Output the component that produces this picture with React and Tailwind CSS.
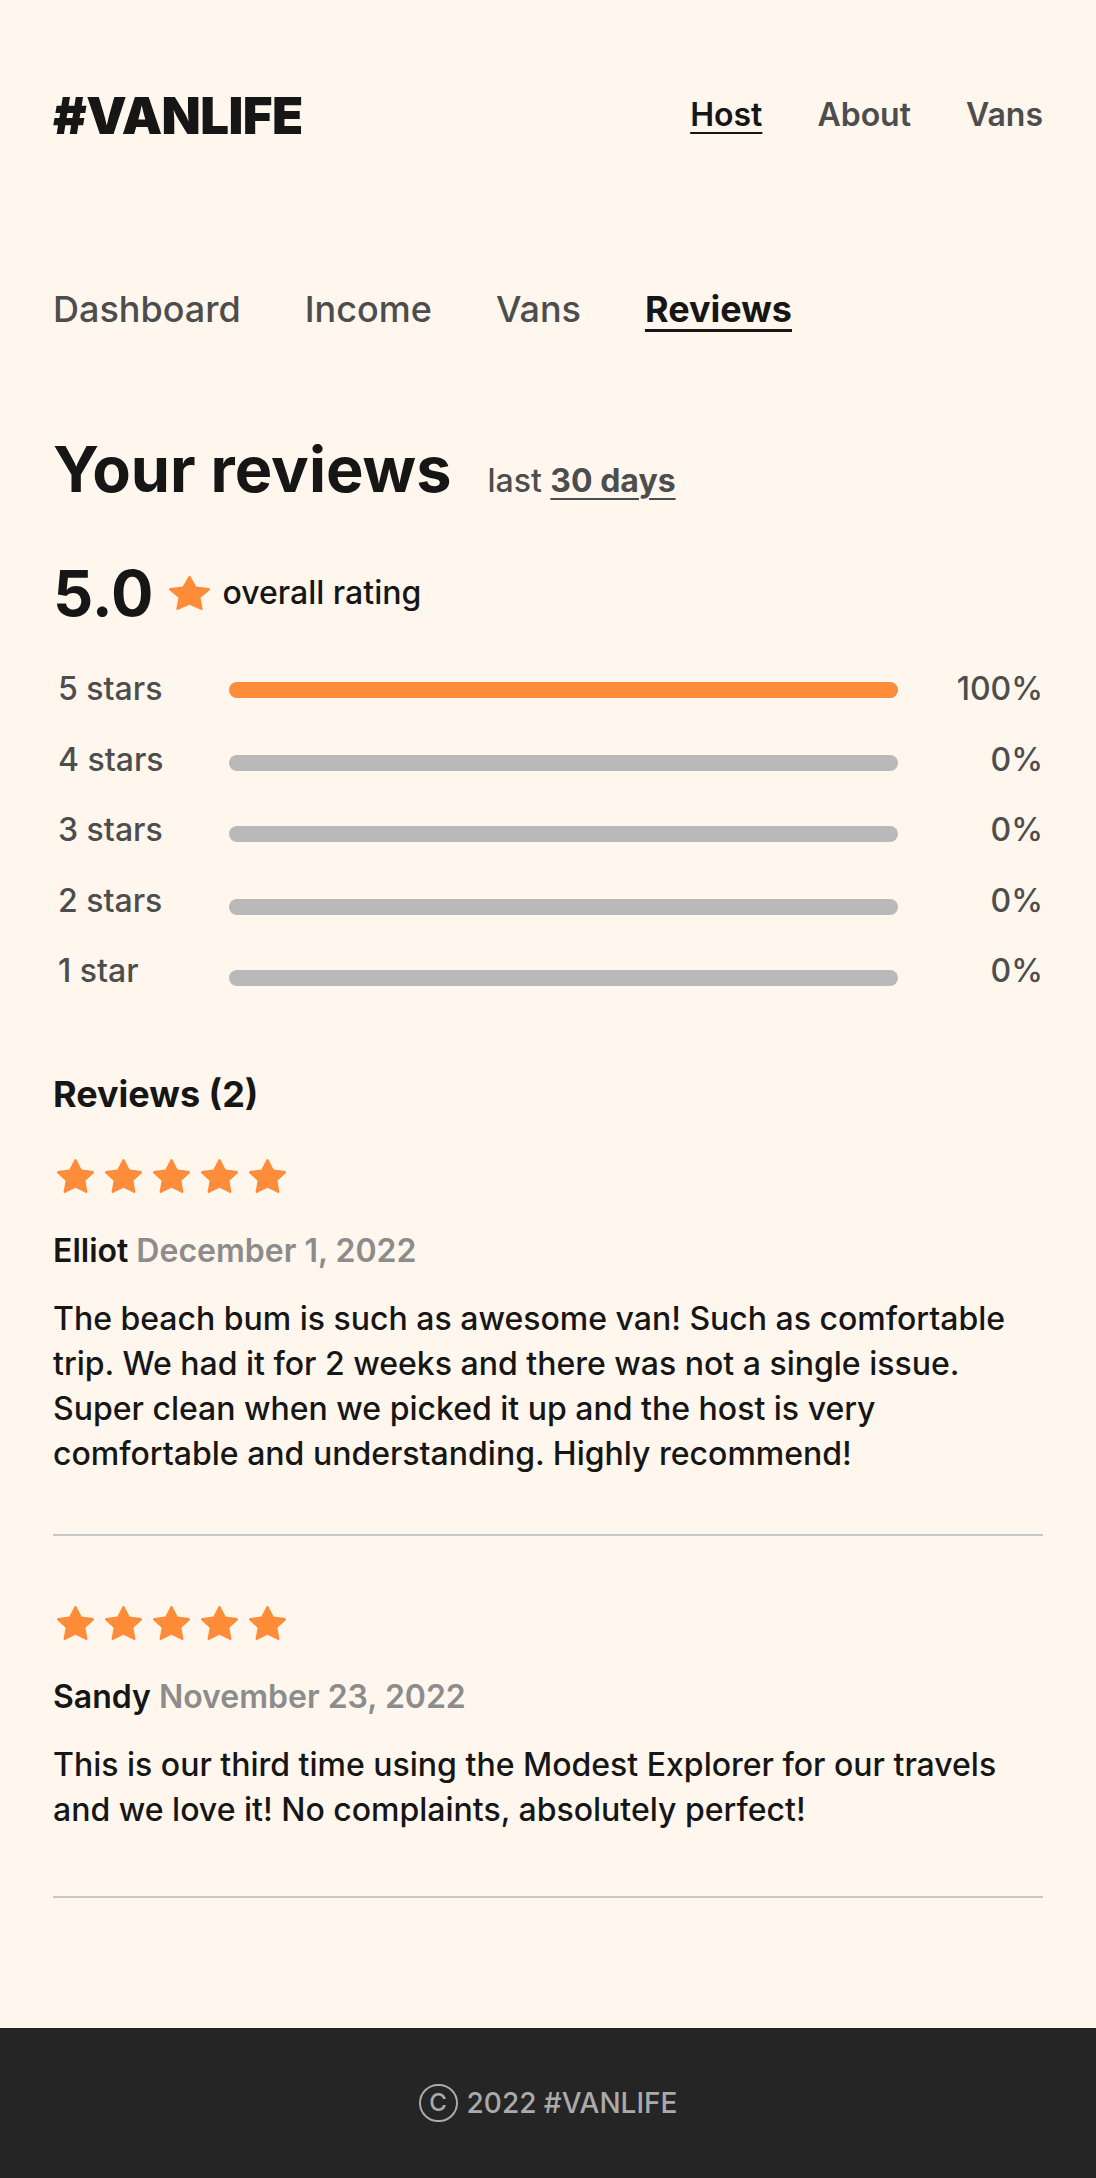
import React from "react";

const starPath =
  "M3.612 15.443c-.386.198-.824-.149-.746-.592l.83-4.73L.173 6.765c-.329-.314-.158-.888.283-.95l4.898-.696L7.538.792c.197-.39.73-.39.927 0l2.184 4.327 4.898.696c.441.062.612.636.282.95l-3.522 3.356.83 4.73c.078.443-.36.79-.746.592L8 13.187l-4.389 2.256z";

const Star = ({ className = "" }) => (
  <svg viewBox="0 0.5 16 15" preserveAspectRatio="none" className={className} fill="#FF8C38">
    <path d={starPath} />
  </svg>
);

const ratings = [
  { label: "5 stars", pct: 100, nudge: "mt-[2px]" },
  { label: "4 stars", pct: 0, nudge: "mt-[6px]" },
  { label: "3 stars", pct: 0, nudge: "mt-[8px]" },
  { label: "2 stars", pct: 0, nudge: "mt-[12px]" },
  { label: "1 star", pct: 0, nudge: "mt-[14px]" },
];

const reviews = [
  {
    name: "Elliot",
    date: "December 1, 2022",
    text: "The beach bum is such as awesome van! Such as comfortable trip. We had it for 2 weeks and there was not a single issue. Super clean when we picked it up and the host is very comfortable and understanding. Highly recommend!",
    hrGap: "mt-[58px]",
  },
  {
    name: "Sandy",
    date: "November 23, 2022",
    text: "This is our third time using the Modest Explorer for our travels and we love it! No complaints, absolutely perfect!",
    hrGap: "mt-[64px]",
  },
];

const ReviewItem = ({ review }) => (
  <div>
    <div className="flex gap-[11px] pl-[4px]">
      {[0, 1, 2, 3, 4].map((i) => (
        <Star key={i} className="w-[37px] h-[34px]" />
      ))}
    </div>
    <p className="mt-[41.5px] text-[32px] leading-[32px] font-semibold">
      <span className="text-[#161616]">{review.name}</span>{" "}
      <span className="text-[#8C8C8C]">{review.date}</span>
    </p>
    <p className="mt-[29px] text-[32px] leading-[45px] font-medium text-[#161616]">
      {review.text}
    </p>
    <hr className={`${review.hrGap} border-0 h-[2px] bg-[#C7C7C7]`} />
  </div>
);

export default function App() {
  return (
    <div className="min-h-screen flex flex-col bg-[#FFF7ED] text-[#161616] font-['Inter',sans-serif]">
      <header className="h-[224px] pt-[6px] flex items-center justify-between px-[53px]">
        <a className="text-[51px] leading-none font-black tracking-[-0.6px]">#VANLIFE</a>
        <nav className="flex gap-[55px] text-[32px] leading-none font-semibold">
          <a className="text-[#161616] underline decoration-2 underline-offset-[6px]">Host</a>
          <a className="text-[#4D4D4D]">About</a>
          <a className="text-[#4D4D4D]">Vans</a>
        </nav>
      </header>

      <main className="flex-1 px-[53px]">
        <nav className="mt-[66.5px] flex gap-[64px] text-[36px] leading-[36px] font-medium text-[#4D4D4D]">
          <a>Dashboard</a>
          <a>Income</a>
          <a>Vans</a>
          <a className="font-bold text-[#161616] underline decoration-[3px] underline-offset-[7px]">Reviews</a>
        </nav>

        <div className="mt-[110.5px] flex items-baseline gap-[36px]">
          <h2 className="text-[63px] leading-[64px] font-bold">Your reviews</h2>
          <p className="text-[32px] text-[#4D4D4D] font-medium">
            last{" "}
            <span className="font-bold underline decoration-2 underline-offset-[6px]">30 days</span>
          </p>
        </div>

        <div className="mt-[55.5px] flex items-center">
          <span className="text-[63px] leading-[64px] font-bold">5.0</span>
          <Star className="ml-[15px] w-[41px] h-[34px]" />
          <span className="ml-[13px] text-[32px] leading-[32px] font-medium">overall rating</span>
        </div>

        <div className="mt-[29.5px] flex flex-col pl-[5px]">
          {ratings.map((r) => (
            <div key={r.label} className="h-[70.5px] flex items-center text-[32px] text-[#4D4D4D] font-medium">
              <span className="w-[171px]">{r.label}</span>
              <div className={`w-[669px] h-[16px] rounded-full bg-[#B9B9B9] overflow-hidden ${r.nudge}`}>
                <div className="h-full rounded-full bg-[#FF8C38]" style={{ width: `${r.pct}%` }} />
              </div>
              <span className="flex-1 text-right">{r.pct}%</span>
            </div>
          ))}
        </div>

        <h3 className="mt-[69px] text-[36px] leading-[36px] font-bold">Reviews (2)</h3>

        <div className="mt-[47.5px] flex flex-col gap-[70px]">
          {reviews.map((r) => (
            <ReviewItem key={r.name} review={r} />
          ))}
        </div>
        <div className="h-[110px]" />
      </main>

      <footer className="h-[150px] bg-[#252525] flex items-center justify-center gap-[9px] text-[#AAAAAA] text-[28px] font-medium">
        <span className="w-[39px] h-[38px] rounded-full border-2 border-[#AAAAAA] flex items-center justify-center text-[24px] leading-none">
          C
        </span>
        <span>2022 #VANLIFE</span>
      </footer>
    </div>
  );
}
